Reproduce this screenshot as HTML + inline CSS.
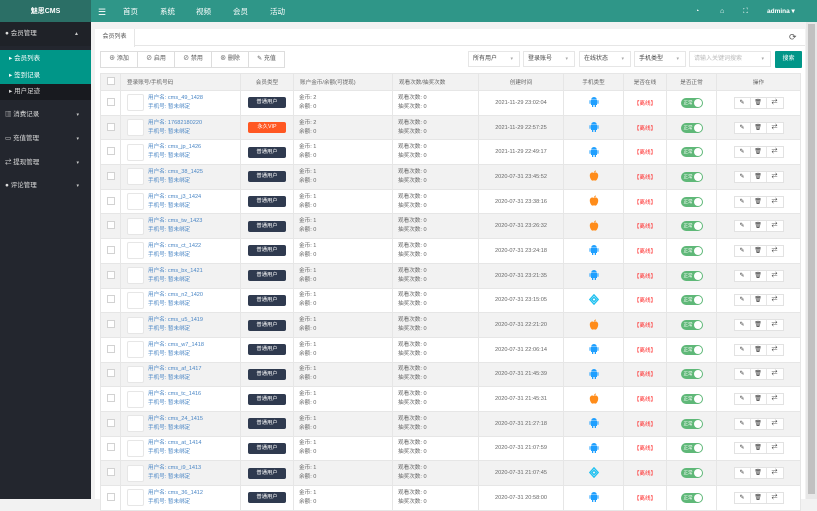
<!DOCTYPE html>
<html><head><meta charset="utf-8"><style>
*{margin:0;padding:0;box-sizing:border-box}
body{width:817px;height:499px;overflow:hidden;background:#f2f2f2;font-family:"Liberation Sans","Noto Sans CJK SC",sans-serif;font-size:6px;color:#666;position:relative}
.top{position:absolute;left:0;top:0;width:817px;height:22px;background:#2f9688}
.logo{position:absolute;left:0;top:0;width:91px;height:22px;background:#2b6f66;color:#fff;font-size:7px;font-weight:bold;text-align:center;line-height:24px}
.nav{position:absolute;top:0;height:22px;line-height:24px;color:#fff;font-size:7.5px}
.side{position:absolute;left:0;top:22px;width:91px;height:477px;background:#23262e}
.si{position:absolute;left:0;width:91px;color:#ddd;font-size:6.5px;padding-left:5px}
.sub{background:#009688;color:#fff;padding-left:9px}
.arr{position:absolute;right:12px;top:0;font-size:5px;color:#ccc}
.panel{position:absolute;left:95px;top:29px;width:710px;height:470px;background:#fff}
.tabbar{position:absolute;left:95px;top:29px;width:710px;height:17px;border-bottom:1px solid #e6e6e6}
.tab{position:absolute;left:95px;top:29px;width:40px;height:18px;background:#fff;border-right:1px solid #e6e6e6;text-align:center;line-height:17px;font-size:6px;color:#555}
.tb{position:absolute;top:51px;height:17px;border:1px solid #ddd;background:#fff;line-height:15px;text-align:center;font-size:6px;color:#555}
.sel{position:absolute;top:51px;height:16px;width:52px;border:1px solid #e6e6e6;line-height:14px;padding-left:4px;font-size:6px;color:#444;background:#fff}
.sel:after{content:"▾";position:absolute;right:6px;color:#aaa;font-size:5px}
table{position:absolute;left:100px;top:73px;width:700px;border-collapse:collapse;table-layout:fixed}
td,th{border:1px solid #e6e6e6;font-weight:normal;font-size:5.6px;color:#666;text-align:center;height:24.7px;white-space:nowrap;overflow:hidden;background:#fff}
th{height:17px;background:#f2f2f2;color:#666}
tbody#b tr:nth-child(even) td{background:#f2f2f2}
.cb{display:inline-block;width:8px;height:8px;border:1px solid #d2d2d2;background:#fff}
.av{display:inline-block;width:17px;height:17px;border:1px solid #e6e6e6;border-radius:2px;background:#fff;vertical-align:middle;margin-right:4px}
.lg{text-align:left;padding-left:6px}
.nm{display:inline-block;vertical-align:middle;color:#4a86c5;line-height:9px;font-size:5.6px}
.ty{display:inline-block;width:38px;height:11px;border-radius:2px;background:#2f3a4f;color:#fff;line-height:11px;font-size:5.3px}
.vip{background:#ff5722}
.l2{text-align:left;padding-left:5px;line-height:9px}
.off{color:#ff2b2b}
.sw{display:inline-block;width:22px;height:10px;border-radius:5px;background:#5fb878;position:relative;color:#fff;font-size:4.5px;line-height:10px;text-align:left;padding-left:3px}
.sw:after{content:"";position:absolute;right:1px;top:1px;width:8px;height:8px;border-radius:50%;background:#fff}
.op{display:inline-block;border:1px solid #e2e2e2;height:12px;background:#fff}
.op span{display:inline-block;width:16px;height:10px;line-height:10px;border-right:1px solid #e6e6e6;font-size:6px;color:#333}
.op span:last-child{border-right:none}
</style></head><body>
<div class="top"></div>
<div class="logo">魅思CMS</div>
<div class="nav" style="left:98px;font-size:9px">☰</div>
<div class="nav" style="left:123px">首页</div>
<div class="nav" style="left:160px">系统</div>
<div class="nav" style="left:196px">视频</div>
<div class="nav" style="left:233px">会员</div>
<div class="nav" style="left:270px">活动</div>
<div class="nav" style="left:695px;font-size:7px">◔</div>
<div class="nav" style="left:720px;font-size:7px">⌂</div>
<div class="nav" style="left:743px;font-size:7px">⛶</div>
<div class="nav" style="left:767px;font-size:6.5px;font-weight:bold">admina ▾</div>
<div class="side">
<div class="si" style="top:0;height:24px;line-height:24px;background:#1f2228">● 会员管理<span class="arr" style="line-height:24px">▲</span></div>
<div class="si sub" style="top:28px;height:17px;line-height:17px">▸ 会员列表</div>
<div class="si sub" style="top:45px;height:17px;line-height:17px">▸ 签到记录</div>
<div class="si" style="top:62px;height:16px;line-height:16px;background:#181a1f;padding-left:9px">▸ 用户足迹</div>
<div class="si" style="top:85px;height:16px;line-height:16px">▥ 消费记录<span class="arr" style="line-height:16px">▾</span></div>
<div class="si" style="top:109px;height:16px;line-height:16px">▭ 充值管理<span class="arr" style="line-height:16px">▾</span></div>
<div class="si" style="top:133px;height:16px;line-height:16px">⇄ 提现管理<span class="arr" style="line-height:16px">▾</span></div>
<div class="si" style="top:156px;height:16px;line-height:16px">● 评论管理<span class="arr" style="line-height:16px">▾</span></div>
</div>
<div style="position:absolute;left:806px;top:22px;width:11px;height:477px;background:#e8e8e8"></div>
<div style="position:absolute;left:808px;top:24px;width:7px;height:470px;background:#c1c1c1"></div>
<div class="panel"></div>
<div class="tabbar"></div>
<div class="tab">会员列表</div>
<div style="position:absolute;left:789px;top:32px;font-size:9px;color:#555">⟳</div>
<div class="tb" style="left:100px;width:38px">⊕ 添加</div>
<div class="tb" style="left:137px;width:38px">⊘ 启用</div>
<div class="tb" style="left:174px;width:38px">⊘ 禁用</div>
<div class="tb" style="left:211px;width:38px">⊗ 删除</div>
<div class="tb" style="left:248px;width:37px">✎ 充值</div>
<div class="sel" style="left:468px">所有用户</div>
<div class="sel" style="left:523px">登录账号</div>
<div class="sel" style="left:579px">在线状态</div>
<div class="sel" style="left:634px">手机类型</div>
<div class="sel" style="left:689px;width:82px;color:#bbb">请输入关键词搜索</div>
<div style="position:absolute;left:775px;top:51px;width:27px;height:17px;background:#009688;color:#fff;font-size:6px;text-align:center;line-height:17px;border-radius:1px">搜索</div>
<table>
<colgroup><col style="width:20px"><col style="width:120px"><col style="width:53px"><col style="width:99px"><col style="width:86px"><col style="width:85px"><col style="width:60px"><col style="width:43px"><col style="width:50px"><col style="width:84px"></colgroup>
<thead><tr><th><span class="cb"></span></th><th class="lg">登录账号/手机号码</th><th>会员类型</th><th class="lg">账户金币/余额(可提现)</th><th class="lg">观看次数/抽奖次数</th><th>创建时间</th><th>手机类型</th><th>是否在线</th><th>是否正常</th><th>操作</th></tr></thead>
<tbody id="b"></tbody>
</table>
<script>
var rows=[["cms_49_1428","普通用户",2,"2021-11-29 23:02:04","a"],["17682180220","永久VIP",2,"2021-11-29 22:57:25","a"],["cms_jp_1426","普通用户",1,"2021-11-29 22:49:17","a"],["cms_38_1425","普通用户",1,"2020-07-31 23:45:52","i"],["cms_j3_1424","普通用户",1,"2020-07-31 23:38:16","i"],["cms_tw_1423","普通用户",1,"2020-07-31 23:26:32","i"],["cms_ct_1422","普通用户",1,"2020-07-31 23:24:18","a"],["cms_bx_1421","普通用户",1,"2020-07-31 23:21:35","a"],["cms_n2_1420","普通用户",1,"2020-07-31 23:15:05","d"],["cms_u5_1419","普通用户",1,"2020-07-31 22:21:20","i"],["cms_w7_1418","普通用户",1,"2020-07-31 22:06:14","a"],["cms_af_1417","普通用户",1,"2020-07-31 21:45:39","a"],["cms_tc_1416","普通用户",1,"2020-07-31 21:45:31","i"],["cms_24_1415","普通用户",1,"2020-07-31 21:27:18","a"],["cms_at_1414","普通用户",1,"2020-07-31 21:07:59","a"],["cms_i9_1413","普通用户",1,"2020-07-31 21:07:45","d"],["cms_36_1412","普通用户",1,"2020-07-31 20:58:00","a"]];
var and='<svg width="10" height="11" viewBox="0 0 10 11"><path fill="#1e9fff" d="M2 4h6v5H2zM2.2 3.6a2.8 2.6 0 0 1 5.6 0zM0.5 4.3h1.1v3.4H0.5zM8.4 4.3h1.1v3.4H8.4zM3 9h1.3v2H3zM5.7 9H7v2H5.7z"/></svg>';
var ios='<svg width="10" height="11" viewBox="0 0 10 11"><path fill="#ff8c1a" d="M5 3C3.5 2 .8 2.6.8 5.6c0 2.5 1.7 5 2.7 5 .8 0 1-.4 1.5-.4s.7.4 1.5.4c1 0 2.7-2.5 2.7-5C9.2 2.6 6.5 2 5 3zM5 2.6C5 1.4 6 .5 6.9.5 7 1.6 6 2.6 5 2.6z"/></svg>';
var dia='<svg width="10" height="11" viewBox="0 0 10 11"><path fill="none" stroke="#1ec0f0" stroke-width="1.3" d="M5 .8L9.2 5.5 5 10.2.8 5.5z M5 3.3L7.2 5.5 5 7.7 2.8 5.5z"/></svg>';
var h='';rows.forEach(function(r){var ic=r[4]=="a"?and:r[4]=="i"?ios:dia;
h+='<tr><td><span class="cb"></span></td><td class="lg"><span class="av"></span><span class="nm">用户名: '+r[0]+'<br>手机号: 暂未绑定</span></td><td><span class="ty'+(r[1]=="永久VIP"?" vip":"")+'">'+r[1]+'</span></td><td class="l2">金币: '+r[2]+'<br>余额: 0</td><td class="l2">观看次数: 0<br>抽奖次数: 0</td><td>'+r[3]+'</td><td>'+ic+'</td><td class="off">【离线】</td><td><span class="sw">正常</span></td><td><span class="op"><span>✎</span><span>🗑</span><span>⇄</span></span></td></tr>';});
document.getElementById('b').innerHTML=h;
</script>
</body></html>
